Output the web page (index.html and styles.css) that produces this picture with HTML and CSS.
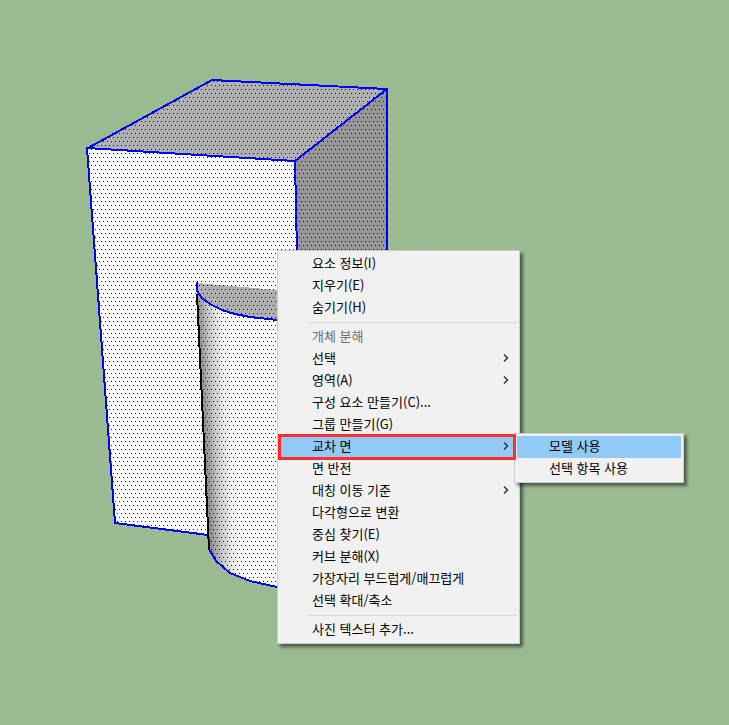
FILE: index.html
```
<!DOCTYPE html>
<html lang="ko">
<head>
    <meta charset="UTF-8">
    <meta name="viewport" content="width=device-width, initial-scale=1.0">
    <title>모델</title>
    <link rel="stylesheet" href="styles.css">
</head>
<body>
    <main class="workspace">
        <svg class="model" width="729" height="725" viewBox="0 0 729 725" shape-rendering="crispEdges" aria-hidden="true">
            <defs>
                <pattern id="dots" width="4" height="8" patternUnits="userSpaceOnUse">
                    <rect x="1" y="1" width="1" height="1" fill="#0000c8"/>
                    <rect x="3" y="5" width="1" height="1" fill="#0000c8"/>
                </pattern>
                <linearGradient id="shade" gradientUnits="userSpaceOnUse" x1="197" y1="294" x2="231" y2="292">
                    <stop offset="0" stop-color="#909090"/>
                    <stop offset="0.3" stop-color="#c8c8c8"/>
                    <stop offset="0.65" stop-color="#f0f0f0"/>
                    <stop offset="1" stop-color="#ffffff"/>
                </linearGradient>
            </defs>

            <!-- Caras de la caja -->
            <path d="M88 148 L212 80 L387 89 L295 161 Z" fill="#b0b0b0"/>
            <path d="M295 161 L387 89 V300 H297 Z" fill="#969696"/>
            <path d="M88 148 L295 161 L298 300 V546 L115 523 Z" fill="#fff"/>

            <!-- Cilindro -->
            <path d="M197 283 L300 292 V322 L277 320 L250 317 L235 314 L222 310 L210 304 L202 298 L197 291 Z" fill="#b0b0b0"/>
            <path d="M197 291 L202 298 L210 304 L222 310 L235 314 L250 317 L277 320 H300 V589 L277 587 L250 581 L230 573 L216 561 L209 549 Z" fill="url(#shade)"/>

            <path d="M88 148 L212 80 L387 89 V300 H300 V589 L277 587 L250 581 L230 573 L216 561 L209 549 L208 535 L115 523 Z" fill="url(#dots)"/>

            <!-- Aristas -->
            <g fill="none" stroke="#0000ff" stroke-width="2">
                <path d="M88 148 L212 80 L387 89 V300"/>
                <path d="M387 89 L295 161 L87 148 L115 523 L208 535"/>
                <path d="M295 161 L298 300"/>
                <path d="M209 549 L216 561 L230 573 L250 581 L277 587 L300 589"/>
            </g>
            <path d="M197 294 L209 549" stroke="#000" stroke-width="2"/>
            <path d="M197 282 V291 L202 298 L210 304 L222 310 L235 314 L250 317 L277 320 L300 322" fill="none" stroke="#0000ff" stroke-width="2"/>
        </svg>

        <ul class="menu context-menu">
            <li><button class="item">요소 정보(I)</button></li>
            <li><button class="item">지우기(E)</button></li>
            <li><button class="item">숨기기(H)</button></li>
            <li class="separator"></li>
            <li><button class="item" disabled>개체 분해</button></li>
            <li><button class="item">선택<svg class="arrow" viewBox="0 0 6 8"><path d="M1 0.5 L4.5 4 L1 7.5"/></svg></button></li>
            <li><button class="item">영역(A)<svg class="arrow" viewBox="0 0 6 8"><path d="M1 0.5 L4.5 4 L1 7.5"/></svg></button></li>
            <li><button class="item">구성 요소 만들기(C)...</button></li>
            <li><button class="item">그룹 만들기(G)</button></li>
            <li class="open">
                <button class="item active">교차 면<svg class="arrow" viewBox="0 0 6 8"><path d="M1 0.5 L4.5 4 L1 7.5"/></svg></button>
                <ul class="menu submenu">
                    <li><button class="item active">모델 사용</button></li>
                    <li><button class="item">선택 항목 사용</button></li>
                </ul>
            </li>
            <li><button class="item">면 반전</button></li>
            <li><button class="item">대칭 이동 기준<svg class="arrow" viewBox="0 0 6 8"><path d="M1 0.5 L4.5 4 L1 7.5"/></svg></button></li>
            <li><button class="item">다각형으로 변환</button></li>
            <li><button class="item">중심 찾기(E)</button></li>
            <li><button class="item">커브 분해(X)</button></li>
            <li><button class="item">가장자리 부드럽게/매끄럽게</button></li>
            <li><button class="item">선택 확대/축소</button></li>
            <li class="separator"></li>
            <li><button class="item">사진 텍스터 추가...</button></li>
        </ul>
    </main>
</body>
</html>
```
FILE: styles.css
```
* {
    box-sizing: border-box;
}

body {
    margin: 0;
    background-color: #9abb91;
    font-family: "Noto Sans CJK KR", sans-serif;
    font-size: 13px;
    color: #000;
}

.workspace {
    position: relative;
    min-height: 100vh;
    overflow: hidden;
}

.model {
    display: block;
}

/* Menús */
.menu {
    position: absolute;
    margin: 0;
    padding: 2px;
    list-style: none;
    background-color: #f1f1f1;
    border: 1px solid #ccc;
    box-shadow: 3px 3px 3px rgba(0, 0, 0, 0.5);
}

.context-menu {
    left: 277px;
    top: 250px;
    width: 243px;
}

.item {
    display: flex;
    align-items: center;
    justify-content: space-between;
    width: 100%;
    height: 22px;
    padding: 0 8px 2px 32px;
    border: none;
    background: none;
    font: inherit;
    line-height: 20px;
    color: inherit;
    text-align: left;
    white-space: nowrap;
}

.item:disabled {
    color: #6d6d6d;
}

.item:hover:enabled,
.active {
    background-color: #91c9f7;
}

.separator {
    height: 7px;
    margin-left: 28px;
    padding-top: 3px;
}

.separator::before {
    content: "";
    display: block;
    height: 1px;
    background-color: #d7d7d7;
}

.arrow {
    width: 6px;
    height: 8px;
    fill: none;
    stroke: #333;
    stroke-width: 1.5;
}

.open {
    position: relative;
}

/* Marco rojo sobre la opción abierta */
.open::after {
    content: "";
    position: absolute;
    inset: -2px 1px -2px -2px;
    border: 3px solid #ff2d2d;
    pointer-events: none;
    z-index: 2;
}

.submenu {
    left: calc(100% - 3px);
    top: -3px;
    width: 170px;
    z-index: 1;
}
```
